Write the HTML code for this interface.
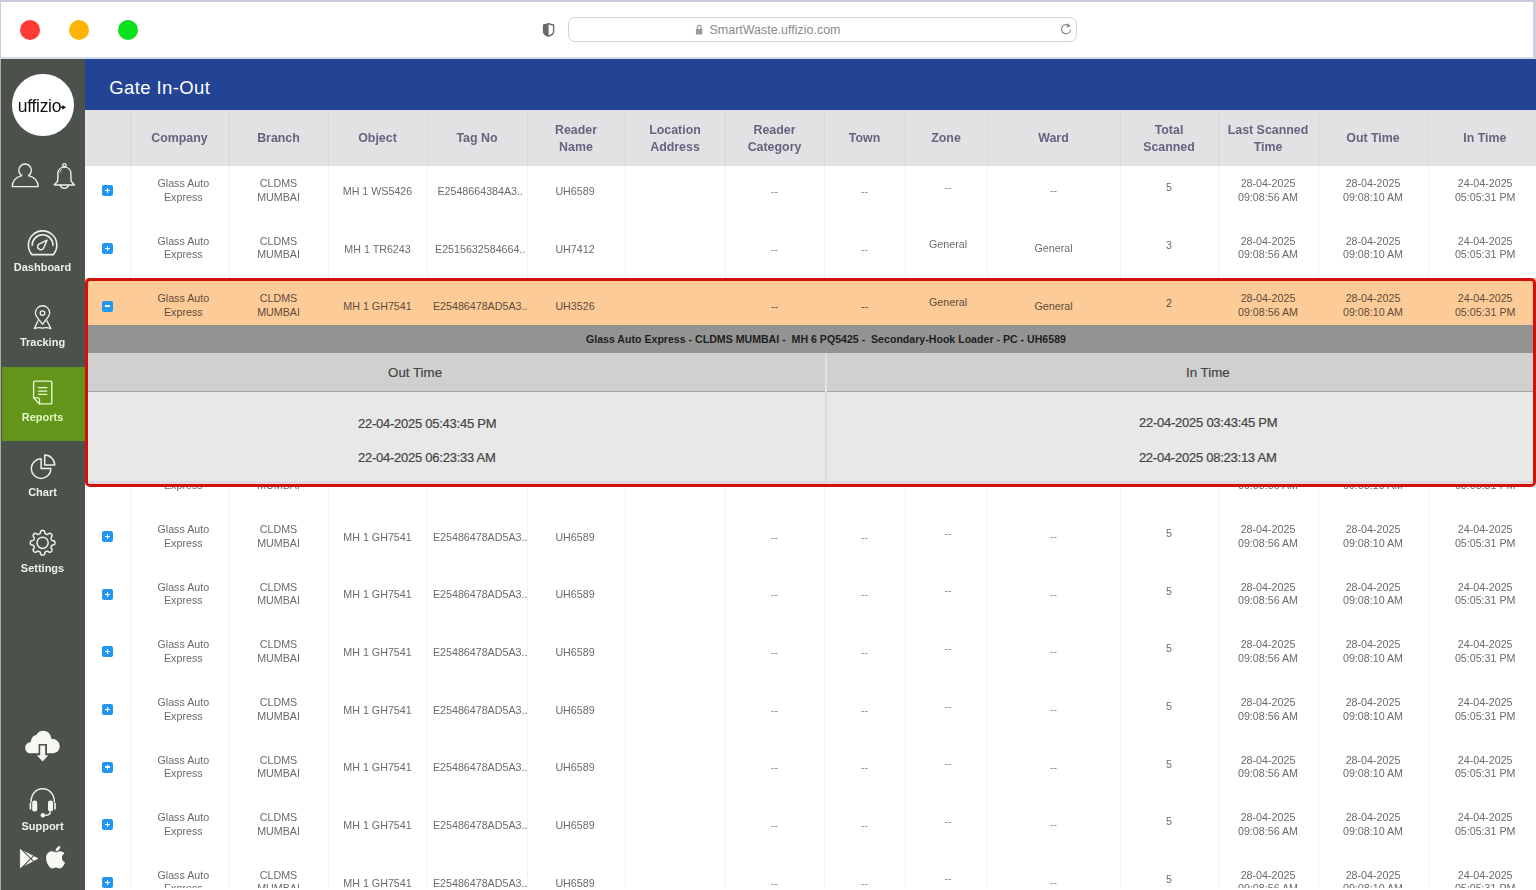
<!DOCTYPE html>
<html><head><meta charset="utf-8">
<style>
*{box-sizing:border-box}
html,body{margin:0;padding:0}
body{width:1536px;height:890px;overflow:hidden;position:relative;background:#fff;font-family:"Liberation Sans",sans-serif;filter:blur(0.45px)}
#chrome{position:absolute;left:0;top:0;width:1536px;height:59px;background:#fff;border-top:2px solid #c9cbdc;border-left:1.5px solid #c9cbdc;border-right:3px solid #c9cfdb;border-bottom:2px solid #d3dbe9}
.dot{position:absolute;width:20px;height:20px;border-radius:50%;top:19.5px}
#url{position:absolute;left:568px;top:17px;width:509px;height:25px;border:1.5px solid #d4d4d4;border-radius:7px;background:#fff}
#urltxt{position:absolute;left:709.5px;top:22px;font-size:12.47px;color:#8a8a8a;white-space:nowrap;line-height:16px}
#side{position:absolute;left:0;top:59px;width:85px;height:831px;background:#4b524b;border-left:1.5px solid #a9b0aa}
#logo{position:absolute;left:12px;top:74px;width:61.5px;height:61.5px;border-radius:50%;background:#fff}
#logotxt{position:absolute;left:17.8px;top:95.5px;font-size:17.5px;line-height:20px;color:#111;letter-spacing:-0.3px;white-space:nowrap}
.sl{position:absolute;left:0;width:85px;text-align:center;color:#eef0ea;font-weight:700;font-size:11px;white-space:nowrap;line-height:13px}
#reports{position:absolute;left:1.5px;top:366.5px;width:83.5px;height:74.7px;background:#63951a}
#main{position:absolute;left:85px;top:59px;width:1451px;height:829px;overflow:hidden}
#title{position:absolute;left:85px;top:59px;width:1451px;height:51px;background:#234394}
#titletxt{position:absolute;left:109.2px;top:76.8px;color:#fff;font-size:18.5px;letter-spacing:0.4px;line-height:22px;white-space:nowrap}
#thead{position:absolute;left:85px;top:110px;width:1451px;height:56px;background:#e2e2e4}
.h{position:absolute;top:110.8px;height:56px;display:flex;align-items:center;justify-content:center;text-align:center;color:#64647f;font-weight:700;font-size:12.4px;line-height:17px}
.hl{position:absolute;top:110px;width:1px;height:56px;background:#d6d6dc}
.vl{position:absolute;top:166px;width:1px;height:722px;background:#f3f3f5}
.t{position:absolute;text-align:center;color:#6b6b6b;font-size:10.7px;line-height:13.6px;white-space:nowrap}
.dash{color:#8c8c8c}
.orow .t{color:#5f4b38}
.ic{position:absolute;left:102px;width:11px;height:11px;background:#2196f3;border-radius:2px}
.ic::before{content:"";position:absolute;left:3px;top:4.9px;width:5px;height:1.3px;background:#fff}
.ic::after{content:"";position:absolute;left:4.9px;top:3px;width:1.3px;height:5px;background:#fff}
.ic.minus::after{display:none}
#clip{position:absolute;left:0;top:0;width:1536px;height:888px;overflow:hidden}
#orange{position:absolute;left:85px;top:278px;width:1451px;height:47px;background:#fdcb98}
#panel{position:absolute;left:85px;top:278px;width:1450.5px;height:209px;border:3px solid #d2110e;border-radius:5px;z-index:5;overflow:hidden}
#ptitle{position:absolute;left:0;top:44px;width:100%;height:28px;padding-left:31.4px;background:#939393;color:#1e1e1e;font-weight:700;font-size:10.6px;line-height:28px;text-align:center;white-space:pre}
#psub{position:absolute;left:0;top:72px;width:100%;height:39px;background:#d0d0d0;border-bottom:1px solid #a3a3a3}
#pbody{position:absolute;left:0;top:111px;width:100%;height:100px;background:#e8e8e8}
#pbot{position:absolute;left:0;top:199.5px;width:100%;height:3.5px;background:#dcdcdc}
.pdiv{position:absolute;left:737px;top:72px;width:2px;height:39px;background:#e2e2e2}
.pdiv2{position:absolute;left:737px;top:111px;width:2px;height:100px;background:#d8d8d8}
.ps{-webkit-text-stroke:0.2px #444;position:absolute;color:#444;font-size:13.3px;line-height:16px;white-space:nowrap;text-align:center}
.pd{font-size:13px;letter-spacing:-0.25px}
</style></head><body>
<div id="clip">
<div id="title"></div>
<div id="titletxt">Gate In-Out</div>
<div id="thead"></div>
<div class="hl" style="left:130px"></div><div class="hl" style="left:229px"></div><div class="hl" style="left:328px"></div><div class="hl" style="left:427px"></div><div class="hl" style="left:527px"></div><div class="hl" style="left:625px"></div><div class="hl" style="left:725px"></div><div class="hl" style="left:824px"></div><div class="hl" style="left:905px"></div><div class="hl" style="left:987px"></div><div class="hl" style="left:1120px"></div><div class="hl" style="left:1218px"></div><div class="hl" style="left:1318px"></div><div class="hl" style="left:1428px"></div>
<div class="h" style="left:130px;width:99px">Company</div><div class="h" style="left:229px;width:99px">Branch</div><div class="h" style="left:328px;width:99px">Object</div><div class="h" style="left:427px;width:100px">Tag No</div><div class="h" style="left:527px;width:98px">Reader<br>Name</div><div class="h" style="left:625px;width:100px">Location<br>Address</div><div class="h" style="left:725px;width:99px">Reader<br>Category</div><div class="h" style="left:824px;width:81px">Town</div><div class="h" style="left:905px;width:82px">Zone</div><div class="h" style="left:987px;width:133px">Ward</div><div class="h" style="left:1120px;width:98px">Total<br>Scanned</div><div class="h" style="left:1218px;width:100px">Last Scanned<br>Time</div><div class="h" style="left:1318px;width:110px">Out Time</div><div class="h" style="left:1430.9px;width:108px">In Time</div>
<div class="vl" style="left:130px"></div><div class="vl" style="left:229px"></div><div class="vl" style="left:328px"></div><div class="vl" style="left:427px"></div><div class="vl" style="left:527px"></div><div class="vl" style="left:625px"></div><div class="vl" style="left:725px"></div><div class="vl" style="left:824px"></div><div class="vl" style="left:905px"></div><div class="vl" style="left:987px"></div><div class="vl" style="left:1120px"></div><div class="vl" style="left:1218px"></div><div class="vl" style="left:1318px"></div><div class="vl" style="left:1428px"></div>
<div id="orange"></div>
<div class="ic" style="top:185.2px"></div>
<div class="t" style="left:133.8px;width:99px;top:177.20px">Glass Auto<br>Express</div>
<div class="t" style="left:229.0px;width:99px;top:177.20px">CLDMS<br>MUMBAI</div>
<div class="t" style="left:328.0px;width:99px;top:184.90px">MH 1 WS5426</div>
<div class="t" style="left:430.2px;width:100px;top:184.90px">E2548664384A3..</div>
<div class="t" style="left:526.0px;width:98px;top:184.90px">UH6589</div>
<div class="t dash" style="left:725.0px;width:99px;top:184.90px">--</div>
<div class="t dash" style="left:824.0px;width:81px;top:184.90px">--</div>
<div class="t dash" style="left:907.0px;width:82px;top:180.80px">--</div>
<div class="t dash" style="left:987.0px;width:133px;top:184.30px">--</div>
<div class="t" style="left:1120.0px;width:98px;top:181.30px">5</div>
<div class="t" style="left:1218.0px;width:100px;top:177.20px">28-04-2025<br>09:08:56 AM</div>
<div class="t" style="left:1318.0px;width:110px;top:177.20px">28-04-2025<br>09:08:10 AM</div>
<div class="t" style="left:1431.2px;width:108px;top:177.20px">24-04-2025<br>05:05:31 PM</div><div class="ic" style="top:242.8px"></div>
<div class="t" style="left:133.8px;width:99px;top:234.84px">Glass Auto<br>Express</div>
<div class="t" style="left:229.0px;width:99px;top:234.84px">CLDMS<br>MUMBAI</div>
<div class="t" style="left:328.0px;width:99px;top:242.54px">MH 1 TR6243</div>
<div class="t" style="left:430.2px;width:100px;top:242.54px">E2515632584664..</div>
<div class="t" style="left:526.0px;width:98px;top:242.54px">UH7412</div>
<div class="t dash" style="left:725.0px;width:99px;top:242.54px">--</div>
<div class="t dash" style="left:824.0px;width:81px;top:242.54px">--</div>
<div class="t" style="left:907.0px;width:82px;top:238.44px">General</div>
<div class="t" style="left:987.0px;width:133px;top:241.94px">General</div>
<div class="t" style="left:1120.0px;width:98px;top:238.94px">3</div>
<div class="t" style="left:1218.0px;width:100px;top:234.84px">28-04-2025<br>09:08:56 AM</div>
<div class="t" style="left:1318.0px;width:110px;top:234.84px">28-04-2025<br>09:08:10 AM</div>
<div class="t" style="left:1431.2px;width:108px;top:234.84px">24-04-2025<br>05:05:31 PM</div><div class="ic minus" style="top:300.5px"></div>
<div class="orow">
<div class="t" style="left:133.8px;width:99px;top:292.48px">Glass Auto<br>Express</div>
<div class="t" style="left:229.0px;width:99px;top:292.48px">CLDMS<br>MUMBAI</div>
<div class="t" style="left:328.0px;width:99px;top:300.18px">MH 1 GH7541</div>
<div class="t" style="left:430.2px;width:100px;top:300.18px">E25486478AD5A3..</div>
<div class="t" style="left:526.0px;width:98px;top:300.18px">UH3526</div>
<div class="t dash" style="left:725.0px;width:99px;top:300.18px">--</div>
<div class="t dash" style="left:824.0px;width:81px;top:300.18px">--</div>
<div class="t" style="left:907.0px;width:82px;top:296.08px">General</div>
<div class="t" style="left:987.0px;width:133px;top:299.58px">General</div>
<div class="t" style="left:1120.0px;width:98px;top:296.58px">2</div>
<div class="t" style="left:1218.0px;width:100px;top:292.48px">28-04-2025<br>09:08:56 AM</div>
<div class="t" style="left:1318.0px;width:110px;top:292.48px">28-04-2025<br>09:08:10 AM</div>
<div class="t" style="left:1431.2px;width:108px;top:292.48px">24-04-2025<br>05:05:31 PM</div>
</div><div class="ic" style="top:358.1px"></div>
<div class="t" style="left:133.8px;width:99px;top:350.12px">Glass Auto<br>Express</div>
<div class="t" style="left:229.0px;width:99px;top:350.12px">CLDMS<br>MUMBAI</div>
<div class="t" style="left:328.0px;width:99px;top:357.82px">MH 1 GH7541</div>
<div class="t" style="left:430.2px;width:100px;top:357.82px">E25486478AD5A3..</div>
<div class="t" style="left:526.0px;width:98px;top:357.82px">UH6589</div>
<div class="t dash" style="left:725.0px;width:99px;top:357.82px">--</div>
<div class="t dash" style="left:824.0px;width:81px;top:357.82px">--</div>
<div class="t dash" style="left:907.0px;width:82px;top:353.72px">--</div>
<div class="t dash" style="left:987.0px;width:133px;top:357.22px">--</div>
<div class="t" style="left:1120.0px;width:98px;top:354.22px">5</div>
<div class="t" style="left:1218.0px;width:100px;top:350.12px">28-04-2025<br>09:08:56 AM</div>
<div class="t" style="left:1318.0px;width:110px;top:350.12px">28-04-2025<br>09:08:10 AM</div>
<div class="t" style="left:1431.2px;width:108px;top:350.12px">24-04-2025<br>05:05:31 PM</div><div class="ic" style="top:415.8px"></div>
<div class="t" style="left:133.8px;width:99px;top:407.76px">Glass Auto<br>Express</div>
<div class="t" style="left:229.0px;width:99px;top:407.76px">CLDMS<br>MUMBAI</div>
<div class="t" style="left:328.0px;width:99px;top:415.46px">MH 1 GH7541</div>
<div class="t" style="left:430.2px;width:100px;top:415.46px">E25486478AD5A3..</div>
<div class="t" style="left:526.0px;width:98px;top:415.46px">UH6589</div>
<div class="t dash" style="left:725.0px;width:99px;top:415.46px">--</div>
<div class="t dash" style="left:824.0px;width:81px;top:415.46px">--</div>
<div class="t dash" style="left:907.0px;width:82px;top:411.36px">--</div>
<div class="t dash" style="left:987.0px;width:133px;top:414.86px">--</div>
<div class="t" style="left:1120.0px;width:98px;top:411.86px">5</div>
<div class="t" style="left:1218.0px;width:100px;top:407.76px">28-04-2025<br>09:08:56 AM</div>
<div class="t" style="left:1318.0px;width:110px;top:407.76px">28-04-2025<br>09:08:10 AM</div>
<div class="t" style="left:1431.2px;width:108px;top:407.76px">24-04-2025<br>05:05:31 PM</div><div class="ic" style="top:473.4px"></div>
<div class="t" style="left:133.8px;width:99px;top:465.40px">Glass Auto<br>Express</div>
<div class="t" style="left:229.0px;width:99px;top:465.40px">CLDMS<br>MUMBAI</div>
<div class="t" style="left:328.0px;width:99px;top:473.10px">MH 1 GH7541</div>
<div class="t" style="left:430.2px;width:100px;top:473.10px">E25486478AD5A3..</div>
<div class="t" style="left:526.0px;width:98px;top:473.10px">UH6589</div>
<div class="t dash" style="left:725.0px;width:99px;top:473.10px">--</div>
<div class="t dash" style="left:824.0px;width:81px;top:473.10px">--</div>
<div class="t dash" style="left:907.0px;width:82px;top:469.00px">--</div>
<div class="t dash" style="left:987.0px;width:133px;top:472.50px">--</div>
<div class="t" style="left:1120.0px;width:98px;top:469.50px">5</div>
<div class="t" style="left:1218.0px;width:100px;top:465.40px">28-04-2025<br>09:08:56 AM</div>
<div class="t" style="left:1318.0px;width:110px;top:465.40px">28-04-2025<br>09:08:10 AM</div>
<div class="t" style="left:1431.2px;width:108px;top:465.40px">24-04-2025<br>05:05:31 PM</div><div class="ic" style="top:531.0px"></div>
<div class="t" style="left:133.8px;width:99px;top:523.04px">Glass Auto<br>Express</div>
<div class="t" style="left:229.0px;width:99px;top:523.04px">CLDMS<br>MUMBAI</div>
<div class="t" style="left:328.0px;width:99px;top:530.74px">MH 1 GH7541</div>
<div class="t" style="left:430.2px;width:100px;top:530.74px">E25486478AD5A3..</div>
<div class="t" style="left:526.0px;width:98px;top:530.74px">UH6589</div>
<div class="t dash" style="left:725.0px;width:99px;top:530.74px">--</div>
<div class="t dash" style="left:824.0px;width:81px;top:530.74px">--</div>
<div class="t dash" style="left:907.0px;width:82px;top:526.64px">--</div>
<div class="t dash" style="left:987.0px;width:133px;top:530.14px">--</div>
<div class="t" style="left:1120.0px;width:98px;top:527.14px">5</div>
<div class="t" style="left:1218.0px;width:100px;top:523.04px">28-04-2025<br>09:08:56 AM</div>
<div class="t" style="left:1318.0px;width:110px;top:523.04px">28-04-2025<br>09:08:10 AM</div>
<div class="t" style="left:1431.2px;width:108px;top:523.04px">24-04-2025<br>05:05:31 PM</div><div class="ic" style="top:588.7px"></div>
<div class="t" style="left:133.8px;width:99px;top:580.68px">Glass Auto<br>Express</div>
<div class="t" style="left:229.0px;width:99px;top:580.68px">CLDMS<br>MUMBAI</div>
<div class="t" style="left:328.0px;width:99px;top:588.38px">MH 1 GH7541</div>
<div class="t" style="left:430.2px;width:100px;top:588.38px">E25486478AD5A3..</div>
<div class="t" style="left:526.0px;width:98px;top:588.38px">UH6589</div>
<div class="t dash" style="left:725.0px;width:99px;top:588.38px">--</div>
<div class="t dash" style="left:824.0px;width:81px;top:588.38px">--</div>
<div class="t dash" style="left:907.0px;width:82px;top:584.28px">--</div>
<div class="t dash" style="left:987.0px;width:133px;top:587.78px">--</div>
<div class="t" style="left:1120.0px;width:98px;top:584.78px">5</div>
<div class="t" style="left:1218.0px;width:100px;top:580.68px">28-04-2025<br>09:08:56 AM</div>
<div class="t" style="left:1318.0px;width:110px;top:580.68px">28-04-2025<br>09:08:10 AM</div>
<div class="t" style="left:1431.2px;width:108px;top:580.68px">24-04-2025<br>05:05:31 PM</div><div class="ic" style="top:646.3px"></div>
<div class="t" style="left:133.8px;width:99px;top:638.32px">Glass Auto<br>Express</div>
<div class="t" style="left:229.0px;width:99px;top:638.32px">CLDMS<br>MUMBAI</div>
<div class="t" style="left:328.0px;width:99px;top:646.02px">MH 1 GH7541</div>
<div class="t" style="left:430.2px;width:100px;top:646.02px">E25486478AD5A3..</div>
<div class="t" style="left:526.0px;width:98px;top:646.02px">UH6589</div>
<div class="t dash" style="left:725.0px;width:99px;top:646.02px">--</div>
<div class="t dash" style="left:824.0px;width:81px;top:646.02px">--</div>
<div class="t dash" style="left:907.0px;width:82px;top:641.92px">--</div>
<div class="t dash" style="left:987.0px;width:133px;top:645.42px">--</div>
<div class="t" style="left:1120.0px;width:98px;top:642.42px">5</div>
<div class="t" style="left:1218.0px;width:100px;top:638.32px">28-04-2025<br>09:08:56 AM</div>
<div class="t" style="left:1318.0px;width:110px;top:638.32px">28-04-2025<br>09:08:10 AM</div>
<div class="t" style="left:1431.2px;width:108px;top:638.32px">24-04-2025<br>05:05:31 PM</div><div class="ic" style="top:704.0px"></div>
<div class="t" style="left:133.8px;width:99px;top:695.96px">Glass Auto<br>Express</div>
<div class="t" style="left:229.0px;width:99px;top:695.96px">CLDMS<br>MUMBAI</div>
<div class="t" style="left:328.0px;width:99px;top:703.66px">MH 1 GH7541</div>
<div class="t" style="left:430.2px;width:100px;top:703.66px">E25486478AD5A3..</div>
<div class="t" style="left:526.0px;width:98px;top:703.66px">UH6589</div>
<div class="t dash" style="left:725.0px;width:99px;top:703.66px">--</div>
<div class="t dash" style="left:824.0px;width:81px;top:703.66px">--</div>
<div class="t dash" style="left:907.0px;width:82px;top:699.56px">--</div>
<div class="t dash" style="left:987.0px;width:133px;top:703.06px">--</div>
<div class="t" style="left:1120.0px;width:98px;top:700.06px">5</div>
<div class="t" style="left:1218.0px;width:100px;top:695.96px">28-04-2025<br>09:08:56 AM</div>
<div class="t" style="left:1318.0px;width:110px;top:695.96px">28-04-2025<br>09:08:10 AM</div>
<div class="t" style="left:1431.2px;width:108px;top:695.96px">24-04-2025<br>05:05:31 PM</div><div class="ic" style="top:761.6px"></div>
<div class="t" style="left:133.8px;width:99px;top:753.60px">Glass Auto<br>Express</div>
<div class="t" style="left:229.0px;width:99px;top:753.60px">CLDMS<br>MUMBAI</div>
<div class="t" style="left:328.0px;width:99px;top:761.30px">MH 1 GH7541</div>
<div class="t" style="left:430.2px;width:100px;top:761.30px">E25486478AD5A3..</div>
<div class="t" style="left:526.0px;width:98px;top:761.30px">UH6589</div>
<div class="t dash" style="left:725.0px;width:99px;top:761.30px">--</div>
<div class="t dash" style="left:824.0px;width:81px;top:761.30px">--</div>
<div class="t dash" style="left:907.0px;width:82px;top:757.20px">--</div>
<div class="t dash" style="left:987.0px;width:133px;top:760.70px">--</div>
<div class="t" style="left:1120.0px;width:98px;top:757.70px">5</div>
<div class="t" style="left:1218.0px;width:100px;top:753.60px">28-04-2025<br>09:08:56 AM</div>
<div class="t" style="left:1318.0px;width:110px;top:753.60px">28-04-2025<br>09:08:10 AM</div>
<div class="t" style="left:1431.2px;width:108px;top:753.60px">24-04-2025<br>05:05:31 PM</div><div class="ic" style="top:819.2px"></div>
<div class="t" style="left:133.8px;width:99px;top:811.24px">Glass Auto<br>Express</div>
<div class="t" style="left:229.0px;width:99px;top:811.24px">CLDMS<br>MUMBAI</div>
<div class="t" style="left:328.0px;width:99px;top:818.94px">MH 1 GH7541</div>
<div class="t" style="left:430.2px;width:100px;top:818.94px">E25486478AD5A3..</div>
<div class="t" style="left:526.0px;width:98px;top:818.94px">UH6589</div>
<div class="t dash" style="left:725.0px;width:99px;top:818.94px">--</div>
<div class="t dash" style="left:824.0px;width:81px;top:818.94px">--</div>
<div class="t dash" style="left:907.0px;width:82px;top:814.84px">--</div>
<div class="t dash" style="left:987.0px;width:133px;top:818.34px">--</div>
<div class="t" style="left:1120.0px;width:98px;top:815.34px">5</div>
<div class="t" style="left:1218.0px;width:100px;top:811.24px">28-04-2025<br>09:08:56 AM</div>
<div class="t" style="left:1318.0px;width:110px;top:811.24px">28-04-2025<br>09:08:10 AM</div>
<div class="t" style="left:1431.2px;width:108px;top:811.24px">24-04-2025<br>05:05:31 PM</div><div class="ic" style="top:876.9px"></div>
<div class="t" style="left:133.8px;width:99px;top:868.88px">Glass Auto<br>Express</div>
<div class="t" style="left:229.0px;width:99px;top:868.88px">CLDMS<br>MUMBAI</div>
<div class="t" style="left:328.0px;width:99px;top:876.58px">MH 1 GH7541</div>
<div class="t" style="left:430.2px;width:100px;top:876.58px">E25486478AD5A3..</div>
<div class="t" style="left:526.0px;width:98px;top:876.58px">UH6589</div>
<div class="t dash" style="left:725.0px;width:99px;top:876.58px">--</div>
<div class="t dash" style="left:824.0px;width:81px;top:876.58px">--</div>
<div class="t dash" style="left:907.0px;width:82px;top:872.48px">--</div>
<div class="t dash" style="left:987.0px;width:133px;top:875.98px">--</div>
<div class="t" style="left:1120.0px;width:98px;top:872.98px">5</div>
<div class="t" style="left:1218.0px;width:100px;top:868.88px">28-04-2025<br>09:08:56 AM</div>
<div class="t" style="left:1318.0px;width:110px;top:868.88px">28-04-2025<br>09:08:10 AM</div>
<div class="t" style="left:1431.2px;width:108px;top:868.88px">24-04-2025<br>05:05:31 PM</div>
</div>
<div id="panel">
  <div id="ptitle">Glass Auto Express - CLDMS MUMBAI -  MH 6 PQ5425 -  Secondary-Hook Loader - PC - UH6589</div>
  <div id="psub"></div>
  <div id="pbody"></div>
  <div id="pbot"></div>
  <div class="pdiv"></div><div class="pdiv2"></div>
  <div class="ps" style="left:227.1px;width:200px;top:84.0px">Out Time</div>
  <div class="ps" style="left:1019.9px;width:200px;top:84.3px">In Time</div>
  <div class="ps pd" style="left:239.1px;width:200px;top:134.5px">22-04-2025 05:43:45 PM</div>
  <div class="ps pd" style="left:238.8px;width:200px;top:168.9px">22-04-2025 06:23:33 AM</div>
  <div class="ps pd" style="left:1020.2px;width:200px;top:133.5px">22-04-2025 03:43:45 PM</div>
  <div class="ps pd" style="left:1019.7px;width:200px;top:168.9px">22-04-2025 08:23:13 AM</div>
</div>
<div id="chrome">
</div>
<div class="dot" style="left:19.7px;background:#fe3a35"></div>
<div class="dot" style="left:69.1px;background:#ffb403"></div>
<div class="dot" style="left:118.4px;background:#08e01a"></div>
<div id="url"></div>
<div id="urltxt">SmartWaste.uffizio.com</div>
<svg style="position:absolute;left:0;top:0" width="1100" height="50">
 <path d="M548.6,23.6 C546.9,24.4 545.2,24.8 543.6,25 L543.6,31.4 C543.6,33.4 546,35.3 548.6,36 C551.2,35.3 553.6,33.4 553.6,31.4 L553.6,25 C552,24.8 550.3,24.4 548.6,23.6 Z" fill="#fff" stroke="#6a6a6a" stroke-width="1.4" stroke-linejoin="round"/>
 <path d="M548.6,23.6 C546.9,24.4 545.2,24.8 543.6,25 L543.6,31.4 C543.6,33.4 546,35.3 548.6,36 Z" fill="#6a6a6a"/>
 <path d="M697.3,29.4 L697.3,27.3 A1.9,1.9 0 0 1 701.1,27.3 L701.1,29.4" fill="none" stroke="#9a9a9a" stroke-width="1.2"/>
 <rect x="695.9" y="29" width="6.5" height="5.6" rx="0.6" fill="#9a9a9a"/>
 <path d="M1069.6,26.2 A4.6,4.6 0 1 0 1070.6,30" fill="none" stroke="#8e8e8e" stroke-width="1.2" stroke-linecap="round"/>
 <path d="M1067.2,23 L1070.6,26.3 L1066.4,27.4 Z" fill="#8e8e8e"/>
</svg>
<div id="side"></div>
<div id="reports"></div>
<div id="logo"></div>
<svg id="sidesvg" width="85" height="890" viewBox="0 0 85 890" style="position:absolute;left:0;top:0;overflow:visible">
<g fill="none" stroke="#eef0ea" stroke-width="1.4" stroke-linecap="round" stroke-linejoin="round">
 <!-- person -->
 <path d="M21.6,175.6 A6.3,6.3 0 1 1 28.6,175.6"/>
 <path d="M21.6,175.6 C15.2,177.4 12.3,181.8 12.3,186.6 L38.1,186.6 C38.1,181.8 35.1,177.4 28.6,175.6"/>
 <!-- bell -->
 <circle cx="64.4" cy="165.3" r="1.7"/>
 <path d="M54.3,185 L74.5,185 L71.2,181.2 C70.9,179 70.9,176 70.9,173.6 C70.9,169.7 68.2,167.1 64.4,167.1 C60.6,167.1 57.9,169.7 57.9,173.6 C57.9,176 57.9,179 57.6,181.2 Z"/>
 <path d="M60.4,185.2 A4.1,4.1 0 0 0 68.4,185.2"/>
 <path d="M59.9,172.3 C60.2,170.9 61,169.8 62,169.2" stroke-width="1"/>
 <!-- dashboard -->
 <path d="M31.8,254.6 C29.6,252 28.4,248.7 28.4,245.1 A14.2,14.2 0 0 1 56.8,245.1 C56.8,248.7 55.6,252 53.4,254.6 Z" stroke-width="1.6"/>
 <path d="M32.2,245.2 A10.4,10.4 0 0 1 53,245.2" stroke-width="1.6"/>
 <path d="M47,240.2 L43.8,247.8 A3.2,3.2 0 1 1 38.6,244.3 Z" stroke-width="1.5"/>
 <!-- tracking pin -->
 <path d="M42.5,324.3 C39.5,320.3 35.4,316 35.4,312.9 A7.15,7.15 0 0 1 49.7,312.9 C49.7,316 45.5,320.3 42.5,324.3 Z" stroke-width="1.3"/>
 <circle cx="42.5" cy="313.1" r="2.3" stroke-width="1.3"/>
 <path d="M38.1,320.8 L34.3,328.6 C37,327.6 39.8,327.3 42.5,328.2 C45.2,327.3 48,327.6 50.9,328.6 L46.9,320.8" stroke-width="1.3"/>
 <!-- reports doc -->
 <path d="M39.5,403.9 L50.6,403.9 A1.2,1.2 0 0 0 51.8,402.7 L51.8,382.3 A1.2,1.2 0 0 0 50.6,381.1 L34.8,381.1 A1.2,1.2 0 0 0 33.6,382.3 L33.6,397.8 Z" stroke="#e9f6d2" stroke-width="1.4"/>
 <path d="M33.6,397.8 L37.8,397.8 A1.7,1.7 0 0 1 39.5,399.5 L39.5,403.9" stroke="#e9f6d2" stroke-width="1.3"/>
 <path d="M38.4,387.7 L46.8,387.7 M38.4,391.1 L46.8,391.1 M38.4,394.4 L46.8,394.4" stroke="#e9f6d2" stroke-width="1.3"/>
 <!-- chart -->
 <path d="M41.1,458.8 A9.8,9.8 0 1 0 50.9,468.6 L41.1,468.6 Z" stroke-width="1.5"/>
 <path d="M44.7,455 A10,10 0 0 1 54.7,465 L44.7,465 Z" stroke-width="1.5"/>
 <!-- settings gear -->
 <path id="gear" stroke-width="1.5" d="M54.90,542.80 L54.89,543.12 L54.87,543.44 L54.82,543.76 L54.72,544.07 L54.54,544.37 L54.18,544.63 L53.60,544.84 L52.88,544.99 L52.30,545.13 L51.93,545.30 L51.72,545.50 L51.58,545.72 L51.48,545.94 L51.38,546.17 L51.28,546.40 L51.19,546.62 L51.10,546.85 L51.02,547.09 L50.96,547.34 L50.97,547.63 L51.10,548.01 L51.42,548.53 L51.82,549.14 L52.09,549.69 L52.15,550.13 L52.07,550.47 L51.92,550.76 L51.73,551.02 L51.52,551.26 L51.30,551.50 L51.06,551.72 L50.82,551.93 L50.56,552.12 L50.27,552.27 L49.93,552.35 L49.49,552.29 L48.94,552.02 L48.33,551.62 L47.81,551.30 L47.43,551.17 L47.14,551.16 L46.89,551.22 L46.65,551.30 L46.42,551.39 L46.20,551.48 L45.97,551.58 L45.74,551.68 L45.52,551.78 L45.30,551.92 L45.10,552.13 L44.93,552.50 L44.79,553.08 L44.64,553.80 L44.43,554.38 L44.17,554.74 L43.87,554.92 L43.56,555.02 L43.24,555.07 L42.92,555.09 L42.60,555.10 L42.28,555.09 L41.96,555.07 L41.64,555.02 L41.33,554.92 L41.03,554.74 L40.77,554.38 L40.56,553.80 L40.41,553.08 L40.27,552.50 L40.10,552.13 L39.90,551.92 L39.68,551.78 L39.46,551.68 L39.23,551.58 L39.00,551.48 L38.78,551.39 L38.55,551.30 L38.31,551.22 L38.06,551.16 L37.77,551.17 L37.39,551.30 L36.87,551.62 L36.26,552.02 L35.71,552.29 L35.27,552.35 L34.93,552.27 L34.64,552.12 L34.38,551.93 L34.14,551.72 L33.90,551.50 L33.68,551.26 L33.47,551.02 L33.28,550.76 L33.13,550.47 L33.05,550.13 L33.11,549.69 L33.38,549.14 L33.78,548.53 L34.10,548.01 L34.23,547.63 L34.24,547.34 L34.18,547.09 L34.10,546.85 L34.01,546.62 L33.92,546.40 L33.82,546.17 L33.72,545.94 L33.62,545.72 L33.48,545.50 L33.27,545.30 L32.90,545.13 L32.32,544.99 L31.60,544.84 L31.02,544.63 L30.66,544.37 L30.48,544.07 L30.38,543.76 L30.33,543.44 L30.31,543.12 L30.30,542.80 L30.31,542.48 L30.33,542.16 L30.38,541.84 L30.48,541.53 L30.66,541.23 L31.02,540.97 L31.60,540.76 L32.32,540.61 L32.90,540.47 L33.27,540.30 L33.48,540.10 L33.62,539.88 L33.72,539.66 L33.82,539.43 L33.92,539.20 L34.01,538.98 L34.10,538.75 L34.18,538.51 L34.24,538.26 L34.23,537.97 L34.10,537.59 L33.78,537.07 L33.38,536.46 L33.11,535.91 L33.05,535.47 L33.13,535.13 L33.28,534.84 L33.47,534.58 L33.68,534.34 L33.90,534.10 L34.14,533.88 L34.38,533.67 L34.64,533.48 L34.93,533.33 L35.27,533.25 L35.71,533.31 L36.26,533.58 L36.87,533.98 L37.39,534.30 L37.77,534.43 L38.06,534.44 L38.31,534.38 L38.55,534.30 L38.78,534.21 L39.00,534.12 L39.23,534.02 L39.46,533.92 L39.68,533.82 L39.90,533.68 L40.10,533.47 L40.27,533.10 L40.41,532.52 L40.56,531.80 L40.77,531.22 L41.03,530.86 L41.33,530.68 L41.64,530.58 L41.96,530.53 L42.28,530.51 L42.60,530.50 L42.92,530.51 L43.24,530.53 L43.56,530.58 L43.87,530.68 L44.17,530.86 L44.43,531.22 L44.64,531.80 L44.79,532.52 L44.93,533.10 L45.10,533.47 L45.30,533.68 L45.52,533.82 L45.74,533.92 L45.97,534.02 L46.20,534.12 L46.42,534.21 L46.65,534.30 L46.89,534.38 L47.14,534.44 L47.43,534.43 L47.81,534.30 L48.33,533.98 L48.94,533.58 L49.49,533.31 L49.93,533.25 L50.27,533.33 L50.56,533.48 L50.82,533.67 L51.06,533.88 L51.30,534.10 L51.52,534.34 L51.73,534.58 L51.92,534.84 L52.07,535.13 L52.15,535.47 L52.09,535.91 L51.82,536.46 L51.42,537.07 L51.10,537.59 L50.97,537.97 L50.96,538.26 L51.02,538.51 L51.10,538.75 L51.19,538.98 L51.28,539.20 L51.38,539.43 L51.48,539.66 L51.58,539.88 L51.72,540.10 L51.93,540.30 L52.30,540.47 L52.88,540.61 L53.60,540.76 L54.18,540.97 L54.54,541.23 L54.72,541.53 L54.82,541.84 L54.87,542.16 L54.89,542.48 Z"/>
 <circle cx="42.6" cy="542.8" r="5.6" stroke-width="1.5"/>
 <!-- headset -->
 <path d="M31,802 C31,794 36,788.8 42.7,788.8 C49.4,788.8 54.4,794 54.4,802" stroke-width="1.5"/>
</g>
<g fill="#f7f8f4">
 <!-- headset cups -->
 <rect x="32.2" y="800.4" width="5" height="11.2" rx="2.3"/>
 <rect x="48" y="800.4" width="5" height="11.2" rx="2.3"/>
 <path d="M29.6,803 L31.2,803 L31.2,809.5 L29.6,809.5 Z M54.2,803 L55.8,803 L55.8,809.5 L54.2,809.5 Z"/>
 <path d="M50.2,811.4 C50.2,814 48.6,815.3 45.2,815.3" fill="none" stroke="#f7f8f4" stroke-width="1.4"/>
 <circle cx="42.9" cy="815.3" r="2.2"/>
 <!-- cloud -->
 <path d="M28.9,753.2 C26.3,752.4 25.2,749.9 25.2,747.7 C25.2,744.8 27.4,742.2 30.8,742.2 C31,738.2 33.3,735.2 36.3,735 C37.7,732.3 40.3,730.8 43.1,730.8 C47.6,730.8 51.1,734.3 51.4,738.9 C51.6,738.9 51.9,738.8 52.2,738.8 C56.1,738.8 59.7,742 59.7,746.3 C59.7,750.2 56.8,753.2 53,753.2 Z"/>
 <path d="M38.6,743.9 L47,743.9 L47,754.2 L49.8,754.2 L42.6,762.6 L35.4,754.2 L38.6,754.2 Z" fill="#4b524b"/>
 <path d="M40.2,745.4 L45.2,745.4 L45.2,755.2 L48.3,755.2 L42.6,761.4 L36.9,755.2 L40.2,755.2 Z"/>
 <!-- apple -->
 <path d="M318.7 268.7c-.2-36.7 16.4-64.4 50-84.8-18.8-26.9-47.2-41.7-84.7-44.6-35.5-2.8-74.3 20.7-88.5 20.7-15 0-49.4-19.7-76.4-19.7C63.3 141.2 4 184.8 4 273.5q0 39.3 14.4 81.2c12.8 36.7 59 126.7 107.2 125.2 25.2-.6 43-17.9 75.8-17.9 31.8 0 48.3 17.9 76.4 17.9 48.6-.7 90.4-82.5 102.6-119.3-65.2-30.7-61.7-90-61.7-91.9zm-56.6-164.2c27.3-32.4 24.8-61.9 24-72.5-24.1 1.4-52 16.4-67.9 34.9-17.5 19.8-27.8 44.3-25.6 71.9 26.1 2 49.9-11.4 69.5-34.3z" transform="translate(45.9,844.3) scale(0.0503)"/>
</g>
<g>
 <!-- play store -->
 <path d="M20.4,849.6 L37.8,858.5 L20.4,867.6 Z" fill="#fafaf8" stroke="#fafaf8" stroke-width="0.8" stroke-linejoin="round"/>
 <path d="M21.6,849.4 L33.6,861.4 M21.6,867.8 L33.6,855.8" stroke="#4b524b" stroke-width="1.05"/>
</g>
</svg>

<div id="logotxt">uffizio</div>
<svg style="position:absolute;left:0;top:0" width="85" height="140"><path d="M60.6,107.3 L63.2,107.3" stroke="#111" stroke-width="1.3"/><path d="M62.3,104.9 L66,107.3 L62.3,109.7 Z" fill="#111"/></svg>
<div class="sl" style="top:261.2px">Dashboard</div>
<div class="sl" style="top:336.2px">Tracking</div>
<div class="sl" style="top:411.3px;color:#e4f6c8">Reports</div>
<div class="sl" style="top:486.3px">Chart</div>
<div class="sl" style="top:561.5px">Settings</div>
<div class="sl" style="top:820.1px">Support</div>
</body></html>
